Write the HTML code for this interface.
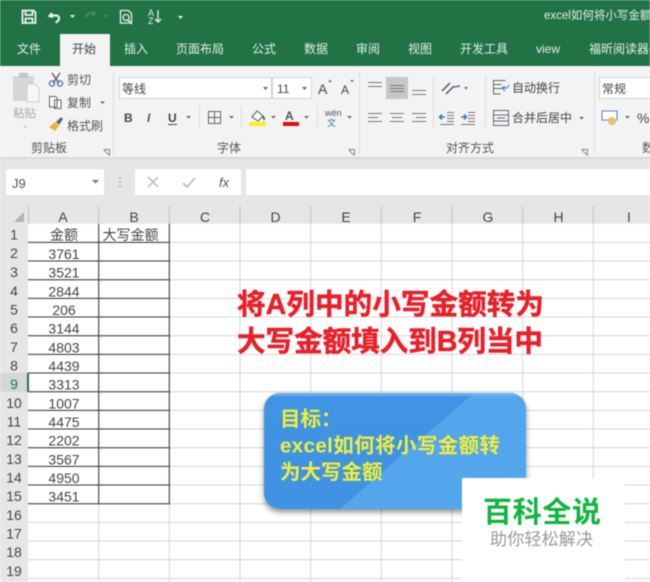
<!DOCTYPE html>
<html lang="zh"><head><meta charset="utf-8"><title>excel</title>
<style>
html,body{margin:0;padding:0;background:#fff;width:650px;height:582px;overflow:hidden}
svg{display:block;filter:blur(.4px)}
text{font-family:"Liberation Sans","Noto Sans CJK SC",sans-serif}
.t{font-size:12px;fill:#444}
.w{font-size:12px;fill:#e4efe8}
.g{font-size:12px;fill:#555}
.c{font-size:14px;fill:#444;text-anchor:middle}
.h{font-size:14px;fill:#444;text-anchor:middle}
.r{font-size:28.6px;font-weight:bold;fill:#e8202a;stroke:#e8202a;stroke-width:.5px}
.y{font-size:20.5px;font-weight:bold;fill:#eef03a}
</style></head><body>
<svg width="650" height="582" viewBox="0 0 650 582" xmlns="http://www.w3.org/2000/svg">
<defs>
<linearGradient id="blue" x1="0" y1="0" x2="0" y2="1"><stop offset="0" stop-color="#3f94e4"/><stop offset="1" stop-color="#3f93e2"/></linearGradient>
<filter id="sh" x="-10%" y="-10%" width="120%" height="130%"><feDropShadow dx="0" dy="3" stdDeviation="3" flood-color="#000" flood-opacity=".45"/></filter>
<clipPath id="cb"><rect x="264" y="393" width="262" height="116" rx="16"/></clipPath>
</defs>

<!-- title bar -->
<rect width="650" height="66" fill="#217346"/>
<rect x="60" y="34" width="50" height="32" fill="#f3f3f3"/>
<rect y="66" width="650" height="92" fill="#f3f3f3"/>
<rect y="157" width="650" height="2" fill="#d8d8d8"/>
<rect y="159" width="650" height="47" fill="#e6e6e6"/>

<!-- QAT -->
<g fill="none" stroke="#e8f0ea" stroke-width="1.8">
<path d="M22.500 10.500h11l2 2v10.500h-13z"/><path d="M25.500 11v4h7v-4M25.500 23v-4.500h7V23"/>
<path d="M52 13l-2.500 3 3.500 1M50 15.500h6.500c3 0 4 5 -1 7" stroke-width="2.200"/>
<path d="M120.500 10.500h8l3 3v9.500h-11z" stroke-width="1.300"/><circle cx="126" cy="17.500" r="3" stroke-width="1.300"/><path d="M128 20l4 4" stroke-width="1.500"/>
<path d="M158 10v12m-3-3l3 3 3-3" stroke-width="1.300"/>
</g>
<path d="M70 15h5l-2.500 3zM178 13.500h5M178 16h5l-2.500 3z" fill="#e8f0ea"/>
<path d="M86 17c1-4 6-5 9-3l-1.500-2.500M95 14l-3 1.500" fill="none" stroke="#4b9069" stroke-width="1.800"/>
<path d="M104 15h4l-2 2.500z" fill="#4b9069"/>
<text x="148" y="16" font-size="9" fill="#e8f0ea">A</text><text x="148" y="24" font-size="9" fill="#e8f0ea">Z</text>
<text x="544" y="19" font-size="11.500" fill="#e4efe8">excel如何将小写金额</text>

<!-- tabs -->
<text class="w" x="17" y="53">文件</text>
<text class="t" x="72" y="53">开始</text>
<text class="w" x="124" y="53">插入</text>
<text class="w" x="176" y="53">页面布局</text>
<text class="w" x="252" y="53">公式</text>
<text class="w" x="304" y="53">数据</text>
<text class="w" x="356" y="53">审阅</text>
<text class="w" x="408" y="53">视图</text>
<text class="w" x="460" y="53">开发工具</text>
<text class="w" x="536" y="53">view</text>
<text class="w" x="589" y="53">福昕阅读器</text>

<!-- clipboard -->
<g>
<rect x="13" y="76" width="21" height="25" rx="1" fill="#d6d6d6"/><rect x="19" y="73" width="9" height="5" fill="#c4c4c4"/>
<path d="M27 84h8l4 4v14H27z" fill="#f6f6f6" stroke="#cfcfcf"/>
<text x="13" y="117" font-size="11.500" fill="#aaa">粘贴</text>
<path d="M23 126h4l-2 2z" fill="#bbb"/>
<path d="M52 73l7 10M60 73l-7 10" stroke="#555" stroke-width="1.300"/>
<circle cx="52" cy="83.500" r="2.600" fill="none" stroke="#4a76a8" stroke-width="1.300"/><circle cx="60" cy="83.500" r="2.600" fill="none" stroke="#4a76a8" stroke-width="1.300"/>
<text class="g" x="67" y="84" font-size="12">剪切</text>
<path d="M49.500 96.500h6l1.500 1.500v9h-7.500zM54.500 100h6.500v8.500h-6.500z" fill="#fafafa" stroke="#666"/>
<text class="g" x="67" y="107">复制</text>
<path d="M100 101.500h5l-2.500 2.500z" fill="#666"/>
<path d="M49 127l6-5 4 4-4 5z" fill="#e8b43e"/><path d="M56 122l5-5 2 2-4 6z" fill="#666"/>
<text class="g" x="67" y="130">格式刷</text>
<text class="g" x="31" y="152">剪贴板</text>
<path d="M103.500 149.500h6v6" fill="none" stroke="#888"/><path d="M104 150l5 5" stroke="#888"/>
<rect x="113" y="71" width="1" height="84" fill="#dcdcdc"/>

<!-- font -->
<rect x="119.500" y="77.500" width="152" height="21" fill="#fff" stroke="#d0d0d0"/>
<rect x="272.500" y="77.500" width="39" height="21" fill="#fff" stroke="#d0d0d0"/>
<text class="t" x="122" y="93">等线</text>
<path d="M263 87h5l-2.500 3z" fill="#666"/>
<text class="t" x="277" y="93">11</text>
<path d="M302 87h5l-2.500 3z" fill="#666"/>
<text x="318" y="94" font-size="14" fill="#444">A</text><path d="M328 82l2-2.500 2 2.500z" fill="#4a86c8"/>
<text x="341" y="94" font-size="12" fill="#444">A</text><path d="M350 80l2 2.500 2-2.500z" fill="#4a86c8"/>
<text x="124" y="122" font-size="12" font-weight="bold" fill="#444">B</text>
<text x="147" y="122" font-size="12" font-style="italic" font-weight="bold" fill="#555">I</text>
<text x="168" y="122" font-size="12" font-weight="bold" fill="#444">U</text><rect x="168" y="124" width="9" height="1" fill="#444"/>
<path d="M186 116h5l-2.500 2.500z" fill="#666"/>
<rect x="199" y="106" width="1" height="22" fill="#dcdcdc"/>
<rect x="208.500" y="111.500" width="12" height="12" fill="none" stroke="#666"/><path d="M214.500 111.500v12M208.500 117.500h12" stroke="#666"/>
<path d="M229 116h5l-2.500 2.500z" fill="#666"/>
<rect x="241" y="106" width="1" height="22" fill="#dcdcdc"/>
<path d="M252 117l5-6 6 5-5 5z" fill="#fff" stroke="#555"/><path d="M263 116l1.500 4" stroke="#3b6fb0" stroke-width="2"/>
<rect x="249" y="122" width="17" height="4" fill="#f7ee1b"/>
<path d="M271 116h5l-2.500 2.500z" fill="#666"/>
<text x="285" y="120" font-size="12" font-weight="bold" fill="#555">A</text>
<rect x="283" y="122" width="16" height="4" fill="#e00a12"/>
<path d="M304 116h5l-2.500 2.500z" fill="#666"/>
<rect x="317" y="106" width="1" height="22" fill="#dcdcdc"/>
<text x="325" y="116" font-size="9" fill="#555">wén</text><text x="327" y="126" font-size="9" fill="#2f6fb8">文</text>
<path d="M347 116h5l-2.500 2.500z" fill="#666"/>
<text class="g" x="217" y="152">字体</text>
<path d="M348.500 149.500h6v6" fill="none" stroke="#888"/><path d="M349 150l5 5" stroke="#888"/>
<rect x="359" y="71" width="1" height="84" fill="#dcdcdc"/>

<!-- alignment -->
<rect x="386" y="77" width="22" height="22" fill="#c6c6c6"/>
<g stroke="#777" stroke-width="1">
<path d="M368 82.500h14M368 86.500h14"/>
<path d="M390 85.500h14M390 88.500h14M390 91.500h14"/>
<path d="M412 90.500h14M412 94.500h14"/>
<path d="M368 113.500h14M368 117.500h10M368 121.500h14"/>
<path d="M390 113.500h14M392 117.500h10M390 121.500h14"/>
<path d="M412 113.500h14M416 117.500h10M412 121.500h14"/>
<path d="M447 112.500h7M447 115.500h7M447 118.500h7M447 121.500h7M440 124.500h14"/>
<path d="M468 112.500h7M468 115.500h7M468 118.500h7M468 121.500h7M461 124.500h14"/>
</g>
<rect x="433" y="77" width="1" height="51" fill="#dcdcdc"/>
<path d="M442 91l8-8M446 94l8-8" stroke="#555" stroke-width="1.500"/><path d="M454 87l6-1" stroke="#3b76b8" stroke-width="1.500"/>
<path d="M464 87h4l-2 2.500z" fill="#666"/>
<path d="M445 117h-5m2-2.500l-2.500 2.500 2.500 2.500" fill="none" stroke="#2f7bc8" stroke-width="1.500"/>
<path d="M461 117h5m-2-2.500l2.500 2.500-2.500 2.500" fill="none" stroke="#2f7bc8" stroke-width="1.500"/>
<rect x="485" y="76" width="1" height="52" fill="#dcdcdc"/>
<path d="M493.500 80.500h12M493.500 84.500h8M493.500 88.500h8M493.500 80v14h7" fill="none" stroke="#666"/><path d="M502 88h5l2-3M505 91l-3-3 3-2" fill="none" stroke="#3b76b8"/>
<text class="t" x="512" y="92">自动换行</text>
<rect x="493.500" y="110.500" width="15" height="15" fill="none" stroke="#666"/><path d="M493.500 115h15M493.500 121h15" stroke="#666"/><path d="M497 118h8" stroke="#3b76b8"/>
<text class="t" x="512" y="122">合并后居中</text>
<path d="M579 117h5l-2.500 2.500z" fill="#666"/>
<text class="g" x="446" y="152">对齐方式</text>
<path d="M581.500 149.500h6v6" fill="none" stroke="#888"/><path d="M582 150l5 5" stroke="#888"/>
<rect x="594" y="71" width="1" height="84" fill="#dcdcdc"/>

<!-- number -->
<rect x="599.500" y="77.500" width="60" height="21" fill="#fff" stroke="#d0d0d0"/>
<text class="t" x="602" y="93">常规</text>
<rect x="602" y="111" width="15" height="9" fill="#fff" stroke="#4a86c8"/><circle cx="612" cy="121" r="4" fill="#e8c36a"/>
<path d="M625 116h5l-2.500 2.500z" fill="#666"/>
<text x="637" y="123" font-size="14" fill="#444">%</text>
<text class="g" x="642" y="152">数</text>
</g>

<!-- formula bar -->
<rect x="6" y="169.500" width="98" height="25.500" fill="#fff"/>
<text x="12" y="188" font-size="13" fill="#555">J9</text>
<path d="M92 180h7l-3.500 3.500z" fill="#777"/>
<path d="M119 177.500h2M119 182h2M119 186.500h2" stroke="#aaa" stroke-width="1.500"/>
<rect x="135" y="169.500" width="106" height="25.500" fill="#fff"/>
<rect x="246" y="169.500" width="404" height="25.500" fill="#fff"/>
<path d="M148 177l10 10M158 177l-10 10" stroke="#bbb" stroke-width="1.500"/>
<path d="M183 183l4 4 8-9" fill="none" stroke="#c4c4c4" stroke-width="2"/>
<text x="219" y="187" font-family="Liberation Serif" font-size="13" font-style="italic" fill="#555">fx</text>

<!-- headers -->
<rect y="206" width="650" height="17.700" fill="#e6e6e6"/>
<rect y="206" width="28" height="376" fill="#e6e6e6"/>
<path d="M14 222h10v-10z" fill="#b4b4b4"/>
<rect y="373" width="28" height="18.700" fill="#d6d6d6"/>
<rect x="27" y="373" width="2" height="18.700" fill="#217346"/>
<g stroke="#c0c0c0" fill="none">
<path d="M28.500 206v18M98.700 206v18M169.300 206v18M240 206v18M310.700 206v18M381.300 206v18M452 206v18M522.700 206v18M593.300 206v18"/>
</g>
<g>
<text class="h" x="63" y="222">A</text><text class="h" x="134" y="222">B</text><text class="h" x="205" y="222">C</text><text class="h" x="275.500" y="222">D</text><text class="h" x="346" y="222">E</text><text class="h" x="417" y="222">F</text><text class="h" x="488" y="222">G</text><text class="h" x="558.500" y="222">H</text><text class="h" x="629" y="222">I</text>
</g>

<!-- gridlines -->
<g stroke="#d4d4d4" stroke-width="1">
<path d="M28 242.400H650M28 261H650M28 279.700H650M28 298.400H650M28 317H650M28 335.700H650M28 354.400H650M28 373H650M28 391.700H650M28 410.400H650M28 429H650M28 447.700H650M28 466.400H650M28 485H650M28 503.700H650M28 522.400H650M28 541H650M28 559.700H650M28 578.400H650"/>
<path d="M98.700 224V582M169.300 224V582M240 224V582M310.700 224V582M381.300 224V582M452 224V582M522.700 224V582M593.300 224V582"/>
</g>
<!-- table borders -->
<g stroke="#333" stroke-width="1" fill="none">
<path d="M28 242.400H170M28 261H170M28 279.700H170M28 298.400H170M28 317H170M28 335.700H170M28 354.400H170M28 373H170M28 391.700H170M28 410.400H170M28 429H170M28 447.700H170M28 466.400H170M28 485H170M28 503.700H170"/>
<path d="M98.700 224V504M169.300 224V504"/>
</g>

<!-- row numbers -->
<text class="h" x="14" y="239.500">1</text><text class="h" x="14" y="258">2</text><text class="h" x="14" y="277">3</text><text class="h" x="14" y="296">4</text><text class="h" x="14" y="314.500">5</text><text class="h" x="14" y="333">6</text><text class="h" x="14" y="352">7</text><text class="h" x="14" y="370.500">8</text><text class="h" x="14" y="389" style="fill:#217346">9</text><text class="h" x="14" y="408">10</text><text class="h" x="14" y="426.500">11</text><text class="h" x="14" y="445">12</text><text class="h" x="14" y="464">13</text><text class="h" x="14" y="482.500">14</text><text class="h" x="14" y="501">15</text><text class="h" x="14" y="520">16</text><text class="h" x="14" y="538.500">17</text><text class="h" x="14" y="557">18</text><text class="h" x="14" y="576">19</text>

<!-- cells -->
<text class="c" x="64" y="240">金额</text><text class="c" x="130.500" y="240">大写金额</text>
<text class="c" x="64" y="259">3761</text><text class="c" x="64" y="277.700">3521</text><text class="c" x="64" y="296.400">2844</text><text class="c" x="64" y="315">206</text><text class="c" x="64" y="333.700">3144</text><text class="c" x="64" y="352.400">4803</text><text class="c" x="64" y="371">4439</text><text class="c" x="64" y="389.700">3313</text><text class="c" x="64" y="408.400">1007</text><text class="c" x="64" y="427">4475</text><text class="c" x="64" y="445.700">2202</text><text class="c" x="64" y="464.400">3567</text><text class="c" x="64" y="483">4950</text><text class="c" x="64" y="501.700">3451</text>

<!-- red text -->
<text class="r" x="237" y="314" textLength="307">将A列中的小写金额转为</text>
<text class="r" x="237" y="351" textLength="306">大写金额填入到B列当中</text>

<!-- blue box -->
<rect x="264" y="393" width="262" height="116" rx="16" fill="url(#blue)" filter="url(#sh)"/>
<g clip-path="url(#cb)">
<path d="M340 509L474 393H526V509z" fill="#53a5ec"/>
<rect x="264" y="393" width="262" height="3" fill="#7ab8ee" opacity=".7"/>
</g>
<text class="y" x="280" y="426">目标：</text>
<text class="y" x="280" y="452.500" textLength="220">excel如何将小写金额转</text>
<text class="y" x="280" y="479">为大写金额</text>

<!-- watermark -->
<rect x="462" y="478" width="163" height="104" fill="#fff"/>
<text x="483" y="522" font-size="29" font-weight="bold" fill="#12b53e" textLength="118">百科全说</text>
<text x="490" y="545" font-size="17" fill="#999" textLength="103">助你轻松解决</text>
</svg>
</body></html>
